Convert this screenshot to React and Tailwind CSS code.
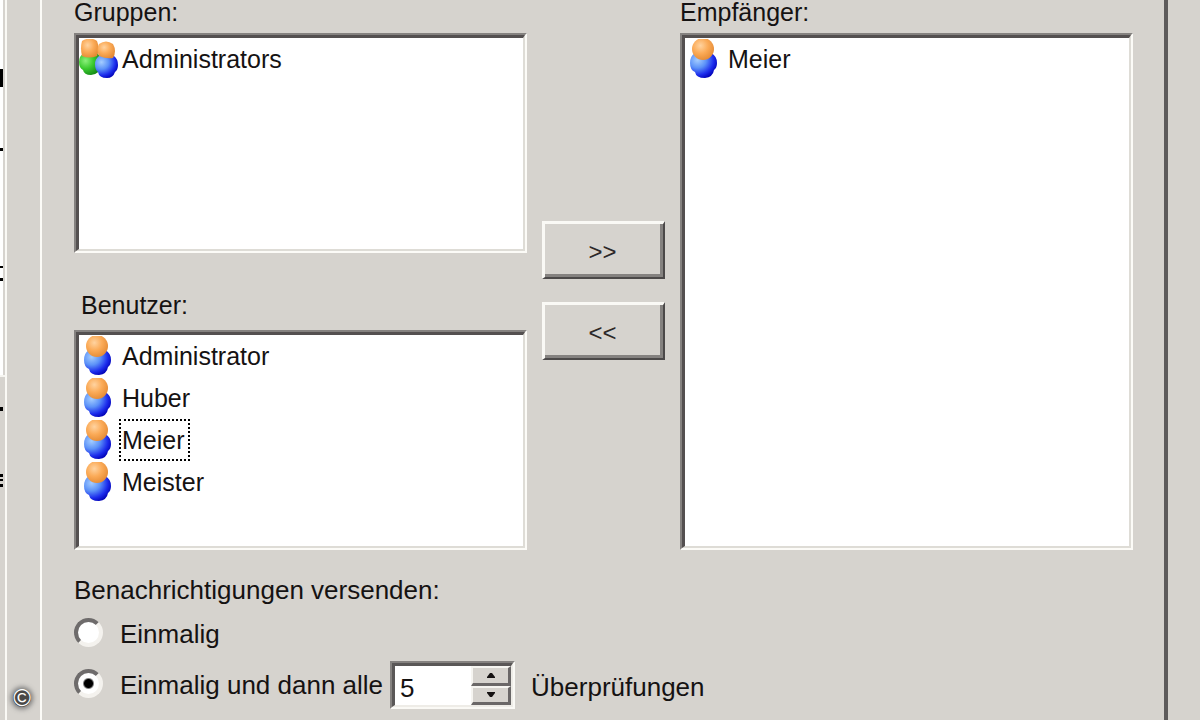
import React, { useState } from 'react'

const USERS = ['Administrator', 'Huber', 'Meier', 'Meister']

function Balls(){
  return (
    <defs>
      <radialGradient id="orange" cx="0.38" cy="0.35" r="0.7">
        <stop offset="0" stopColor="#ffd3a0" />
        <stop offset="0.5" stopColor="#fbab58" />
        <stop offset="1" stopColor="#e48a34" />
      </radialGradient>
      <radialGradient id="blue" cx="0.28" cy="0.28" r="0.8">
        <stop offset="0" stopColor="#a4cdff" />
        <stop offset="0.4" stopColor="#5c92f8" />
        <stop offset="0.75" stopColor="#1c2cec" />
        <stop offset="1" stopColor="#0000b4" />
      </radialGradient>
      <radialGradient id="green" cx="0.3" cy="0.35" r="0.8">
        <stop offset="0" stopColor="#8cf07c" />
        <stop offset="0.45" stopColor="#3ccb30" />
        <stop offset="1" stopColor="#0c7c10" />
      </radialGradient>
    </defs>
  )
}

function UserIcon(){
  return (
    <svg viewBox="0 0 40 40" className="h-10 w-10 shrink-0" aria-hidden="true">
      <Balls />
      <path d="M10 14 H26 Q32 17 32 24 Q32 29 29 31 Q28 38 20 39 Q11 39 10 33 Q5 31 5 24 Q5 17 10 14 Z" fill="url(#blue)" />
      <circle cx="18" cy="10" r="11" fill="url(#orange)" />
    </svg>
  )
}

function GroupIcon(){
  return (
    <svg viewBox="0 0 40 40" className="h-10 w-10 shrink-0" aria-hidden="true">
      <Balls />
      <path d="M5 14 H18 Q22 17 22 24 Q22 35 12 36 Q5 36 4 31 Q0 29 0 23 Q0 17 5 14 Z" fill="url(#green)" />
      <path d="M3 2 Q11 -3 18 2 Q21 9 18 17 Q10 20 3 17 Q1 9 3 2 Z" fill="url(#orange)" />
      <path d="M20 17 H35 Q39 20 39 26 Q39 31 36 33 Q34 39 28 39 Q20 39 19 33 Q16 31 16 25 Q16 20 20 17 Z" fill="url(#blue)" />
      <path d="M20 5 Q27 0 34 5 Q38 12 34 19 Q27 20 20 17 Q17 11 20 5 Z" fill="url(#orange)" />
    </svg>
  )
}

function ListBox({ label, indent, items, icon, focused, onPick, size }){
  const Icon = icon
  return (
    <>
      <h2 className={`leading-6 ${indent ? 'mt-10 mb-[13px] pl-[7px]' : 'mb-[9px]'}`}>{label}</h2>
      <div className={`border-2 border-t-[#858280] border-l-[#858280] border-r-[#fcfbf7] border-b-[#fcfbf7] ${size}`}>
        <ul role="listbox" aria-label={label} className="h-full border-t-3 border-r-2 border-b-2 border-l-3 border-t-[#545050] border-l-[#545050] border-r-[#dedcd6] border-b-[#dedcd6] bg-white">
          {items.map(name => (
            <li key={name} role="option" aria-selected={focused === name} onClick={()=>onPick(name)} className="flex h-[42px] items-center">
              <Icon />
              <span className={`border-2 border-dotted pr-[3px] pl-px leading-[38px] ${focused === name ? 'border-black' : 'border-transparent'}`}>{name}</span>
            </li>
          ))}
        </ul>
      </div>
    </>
  )
}

function MoveButton({ children, label, onClick }){
  return (
    <button aria-label={label} onClick={onClick} className="h-[58px] w-full border-t-3 border-r-2 border-b-2 border-l-3 border-t-[#faf9f5] border-l-[#faf9f5] border-r-[#4c4949] border-b-[#4c4949]">
      <span className="flex h-full items-center justify-center border-r-3 border-b-3 border-[#858280] pt-[6px] text-[24px] text-[#2c2828]">{children}</span>
    </button>
  )
}

function SpinButton({ label, d, onClick }){
  return (
    <button aria-label={label} onClick={onClick} className="flex flex-1 items-center justify-center border-t-2 border-r-3 border-b-3 border-l-2 border-t-[#f6f5f1] border-l-[#f6f5f1] border-r-[#6a6767] border-b-[#6a6767] bg-[#d6d3ce]">
      <svg viewBox="0 0 8 5" className="h-[5px] w-2"><path d={d} fill="#151212" /></svg>
    </button>
  )
}

const radio = 'h-[29px] w-[29px] shrink-0 appearance-none rounded-full border-4 border-t-[#6e6b6b] border-l-[#6e6b6b] border-r-[#f4f2ee] border-b-[#f4f2ee] bg-white checked:bg-[radial-gradient(circle,#000_4px,#fff_6px)]'

export default function App(){
  const [user, setUser] = useState('Meier')
  const [recipients, setRecipients] = useState(['Meier'])
  const [mode, setMode] = useState('repeat')
  const [count, setCount] = useState(5)

  function add(){ setRecipients(r=>r.includes(user) ? r : [...r, user]) }
  function remove(){ setRecipients(r=>r.filter(n=>n !== user)) }

  return (
    <div className="relative flex min-h-screen overflow-hidden bg-[#d6d3ce] font-['Liberation_Sans',Arial,sans-serif] text-[25px] text-[#151212]">
      {/* edge of the neighbouring pane */}
      <div className="w-[7px] shrink-0 border-r-2 border-[#faf9f5]">
        <svg viewBox="0 0 5 720" className="h-[720px] w-[5px]" aria-hidden="true">
          <path d="M0 0h3v375h-3z" fill="#fff" />
          <path d="M0 375h5v2h-5z" fill="#f6f5f1" />
          <path d="M0 69h3v18h-3zM0 148h3v3h-3zM0 266h3v2h-3zM0 278h3v3h-3zM0 407h3v4h-3zM0 474h3v3h-3zM0 479h3v2h-3zM0 484h3v3h-3z" fill="#000" />
        </svg>
      </div>

      <main className="ml-[33px] mr-8 flex-1 border-l-2 border-r-4 border-l-[#fcfbf7] border-r-[#5e5b5b] pr-[31px] pl-8">
        <div className="grid grid-cols-[1fr_123px_1fr] gap-x-[15px]">
          <section>
            <ListBox label="Gruppen:" items={['Administrators']} icon={GroupIcon} onPick={()=>{}} size="h-[220px]" />
            <ListBox label="Benutzer:" indent items={USERS} icon={UserIcon} focused={user} onPick={setUser} size="h-[220px]" />
          </section>
          <div className="flex flex-col gap-[23px] pt-[221px]">
            <MoveButton label="Hinzufügen" onClick={add}>&gt;&gt;</MoveButton>
            <MoveButton label="Entfernen" onClick={remove}>&lt;&lt;</MoveButton>
          </div>
          <section className="flex flex-col">
            <ListBox label="Empfänger:" items={recipients} icon={UserIcon} onPick={setUser} size="flex-1" />
          </section>
        </div>

        <fieldset className="mt-6 flex flex-col gap-[11px] text-[26px] leading-8">
          <legend className="mb-3">Benachrichtigungen versenden:</legend>
          <label className="flex items-start gap-[17px]">
            <input type="radio" name="mode" checked={mode === 'once'} onChange={()=>setMode('once')} className={radio} />
            Einmalig
          </label>
          <div className="flex items-center">
            <label className="flex items-start gap-[17px]">
              <input type="radio" name="mode" checked={mode === 'repeat'} onChange={()=>setMode('repeat')} className={radio} />
              Einmalig und dann alle
            </label>
            <div className="mr-4 ml-[7px] h-12 w-[125px] border-2 border-t-[#858280] border-l-[#858280] border-r-[#faf9f5] border-b-[#faf9f5]">
              <div className="flex h-full border-t-3 border-r-2 border-b-2 border-l-3 border-t-[#5a5757] border-l-[#5a5757] border-r-[#eeece7] border-b-[#eeece7] bg-white">
                <input id="count" type="text" value={count} onChange={e=>setCount(Number(e.target.value) || 0)} className="w-0 min-w-0 flex-1 pt-1 pl-[5px] outline-none" />
                <div className="flex w-10 flex-col">
                  <SpinButton label="Mehr" d="M3 0h2l3 4v1H0V4z" onClick={()=>setCount(c=>c + 1)} />
                  <SpinButton label="Weniger" d="M0 0h8v1L5 5H3L0 1z" onClick={()=>setCount(c=>c - 1)} />
                </div>
              </div>
            </div>
            <label htmlFor="count" className="pt-1">Überprüfungen</label>
          </div>
        </fieldset>
      </main>

      <span className="absolute bottom-[13px] left-[13px] flex h-[18px] w-[18px] items-center justify-center rounded-full bg-[#4a4846] text-[24px] text-white shadow-[0_0_5px_2px_#777]">©</span>
    </div>
  )
}
